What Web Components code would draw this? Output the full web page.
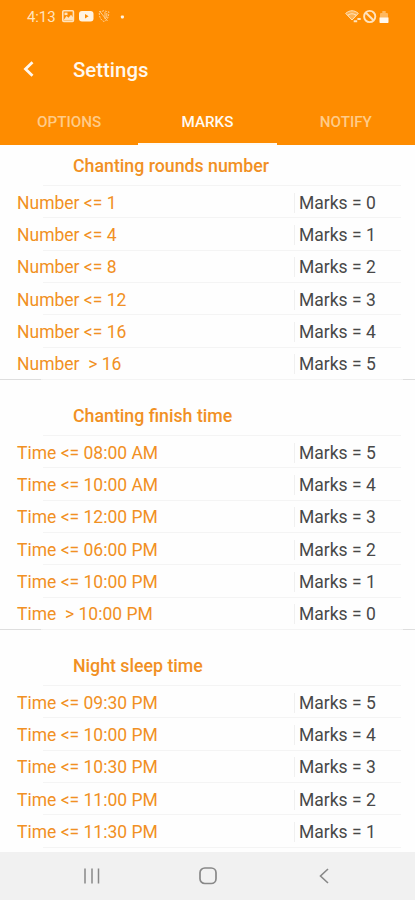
<!DOCTYPE html>
<html lang="en">
<head>
<meta charset="utf-8">
<title>Settings</title>
<style>
  body {
    margin: 0;
    width: 415px;
    height: 900px;
    overflow: hidden;
    background: #fefefe;
    font-family: Roboto, sans-serif;
    --color-primary: #fe8c00;
    --color-label: #f19023;
    --color-line: #f4f4f4;
  }
</style>
</head>
<body>
<settings-screen></settings-screen>

<script>
class StatusBar extends HTMLElement {
  constructor() {
    super();
    this.attachShadow({ mode: "open" }).innerHTML = /*html*/ `
      <style>
      :host {
        display: flex;
        justify-content: space-between;
        align-items: center;
        height: 34px;
        padding: 0 25px 0 27px;
        color: #ffe3bd;
      }

      .group {
        display: flex;
        align-items: center;
      }

      .time {
        font-size: 15px;
        line-height: 34px;
        letter-spacing: -0.1px;
        width: 35px;
      }

      svg {
        display: block;
      }
      </style>

      <div class="group">
        <span class="time">4:13</span>
        <svg width="66" height="16" viewBox="0 0 66 16" fill="none">
          <rect x="0.8" y="1.8" width="10.6" height="10.6" rx="1" stroke="currentColor" stroke-width="1.6"/>
          <path d="M2 10.5 4.5 7l2 1.8L9 5.8l2 2.4v3H2z" fill="currentColor"/>
          <rect x="2.5" y="3.6" width="3" height="2.5" fill="currentColor"/>
          <rect x="17" y="2" width="14.5" height="10.5" rx="3" fill="#fff3e2"/>
          <path d="M23 5v4.4l3.6-2.2z" fill="#fe8c00"/>
          <g stroke="currentColor" stroke-width="1" opacity="0.75">
            <path d="M42 1.6c-2 1-3.4 1.2-4.8 1.2 0 4.6.8 7.6 4.8 9.8 4-2.2 4.8-5.2 4.8-9.8-1.4 0-2.8-.2-4.8-1.2z" stroke-dasharray="2 1"/>
            <path d="m37.5 2 8 10M43 3v7M44.8 4v5"/>
          </g>
          <rect x="58.9" y="6.4" width="3" height="3" rx="0.8" fill="#fff3e2"/>
        </svg>
      </div>
      <svg width="45" height="16" viewBox="0 0 45 16" fill="none" stroke="currentColor">
        <path d="M.7 4.4c4-3.5 8.600-3.5 12.600 0L7 11z" fill="currentColor" fill-opacity="0.45" stroke-width="1"/>
        <path d="M2.8 6.3c2.7-2 5.7-2 8.4 0" stroke-width="1.2"/>
        <path d="M8.7 12.2h3.5M12.4 10h3.3" stroke-width="1.9"/>
        <circle cx="24.7" cy="7.5" r="5.6" stroke-width="1.9"/>
        <path d="m20.9 3.7 7.6 7.6" stroke-width="2"/>
        <path d="M35 13V5.3c0-.8.5-1.3 1.3-1.3h1V2h3.4v2h1c.8 0 1.3.5 1.3 1.3V13c0 .6-.4 1-1 1h-6c-.6 0-1-.4-1-1z" fill="currentColor" fill-opacity="0.5" stroke="none"/>
        <path d="M34.5 8.5h9V13c0 .6-.4 1-1 1h-7c-.6 0-1-.4-1-1z" fill="#fff8ef" stroke="none"/>
      </svg>
    `;
  }
}
customElements.define("status-bar", StatusBar);

class AppBar extends HTMLElement {
  constructor() {
    super();
    this.attachShadow({ mode: "open" }).innerHTML = /*html*/ `
      <style>
      :host {
        display: flex;
        align-items: center;
        gap: 38px;
        height: 70px;
        padding-left: 23px;
        color: #fff8ee;
      }

      h1 {
        margin: 0;
        padding-top: 1px;
        font-size: 20.4px;
        font-weight: 500;
        line-height: 24px;
      }
      </style>

      <svg width="12" height="16" viewBox="0 0 12 16" fill="none" stroke="currentColor" stroke-width="2.8">
        <path d="M9.5 1.3 2.5 8l7 6.7"/>
      </svg>
      <h1><slot></slot></h1>
    `;
  }
}
customElements.define("app-bar", AppBar);

class TabItem extends HTMLElement {
  constructor() {
    super();
    this.attachShadow({ mode: "open" }).innerHTML = /*html*/ `
      <style>
      :host {
        display: block;
        flex: 1;
        box-sizing: border-box;
        height: 41px;
        padding-top: 8px;
        text-align: center;
        font-size: 15.2px;
        font-weight: 500;
        line-height: 20px;
        color: #ffcb88;
        border-bottom: 2px solid transparent;
      }

      :host([selected]) {
        color: #fffaf3;
        border-color: #fffaf3;
      }
      </style>
      <slot></slot>
    `;
  }
}
customElements.define("tab-item", TabItem);

class MarkRow extends HTMLElement {
  constructor() {
    super();
    this.attachShadow({ mode: "open" }).innerHTML = /*html*/ `
      <style>
      :host {
        display: flex;
        align-items: center;
        box-sizing: border-box;
        height: 32.33px;
        margin: 0 14px 0 17px;
        padding-top: 1px;
        /* line starts a little after the label's left edge */
        background: linear-gradient(var(--color-line), var(--color-line)) 26px 100% / 100% 1px no-repeat;
        font-size: 17.5px;
        line-height: 20px;
      }

      .label {
        flex: 1;
        color: var(--color-label);
        white-space: pre;
      }

      .marks {
        width: 102px;
        padding-left: 4px;
        border-left: 1px solid #f0f0f0;
        color: #484848;
      }
      </style>
      <span class="label"><slot></slot></span>
      <span class="marks"></span>
    `;
  }

  connectedCallback() {
    this.shadowRoot.querySelector(".marks").textContent = `Marks = ${this.getAttribute("marks")}`;
  }
}
customElements.define("mark-row", MarkRow);

class MarkSection extends HTMLElement {
  constructor() {
    super();
    this.attachShadow({ mode: "open" }).innerHTML = /*html*/ `
      <style>
      :host {
        display: block;
        box-sizing: border-box;
        height: 250px;
        /* divider is darker at both ends, past the cells */
        background: linear-gradient(to right, #dedede 41px, #f1f1f1 41px 403px, #dedede 403px) bottom / 100% 1px no-repeat;
      }

      h2 {
        box-sizing: border-box;
        height: 56px;
        margin: 0 14px 0 43px;
        padding: 26px 0 0 30px;
        border-bottom: 1px solid var(--color-line);
        color: var(--color-label);
        font-size: 17.75px;
        font-weight: 500;
        line-height: 21px;
      }
      </style>
      <h2></h2>
      <slot></slot>
    `;
  }

  connectedCallback() {
    this.shadowRoot.querySelector("h2").textContent = this.getAttribute("heading");
  }
}
customElements.define("mark-section", MarkSection);

class NavBar extends HTMLElement {
  constructor() {
    super();
    this.attachShadow({ mode: "open" }).innerHTML = /*html*/ `
      <style>
      :host {
        display: flex;
        align-items: center;
        justify-content: space-between;
        box-sizing: border-box;
        height: 48px;
        padding: 0 82px 0 83px;
        background: #f1f1f1;
        color: #888;
      }
      </style>
      <svg width="18" height="18" viewBox="0 0 18 18" fill="none" stroke="currentColor" stroke-width="1.5">
        <path d="M2 1.5v15M9 1.5v15M15.5 1.5v15"/>
      </svg>
      <svg width="18" height="18" viewBox="0 0 18 18" fill="none" stroke="currentColor" stroke-width="1.7">
        <rect x="1" y="1" width="16" height="15.5" rx="4.8"/>
      </svg>
      <svg width="18" height="18" viewBox="0 0 18 18" fill="none" stroke="currentColor" stroke-width="1.6">
        <path d="M13 2 5.5 9l7.5 7"/>
      </svg>
    `;
  }
}
customElements.define("nav-bar", NavBar);

class SettingsScreen extends HTMLElement {
  constructor() {
    super();
    this.attachShadow({ mode: "open" }).innerHTML = /*html*/ `
      <style>
      :host {
        display: flex;
        flex-direction: column;
        height: 900px;
      }

      header {
        background: var(--color-primary);
      }

      nav {
        display: flex;
      }

      main {
        flex: 1;
        min-height: 0;
        overflow: hidden;
      }

      /* the list is scrolled a little under the header */
      .list {
        margin-top: -15px;
      }
      </style>

      <header>
        <status-bar></status-bar>
        <app-bar>Settings</app-bar>
        <nav>
          <tab-item>OPTIONS</tab-item>
          <tab-item selected>MARKS</tab-item>
          <tab-item>NOTIFY</tab-item>
        </nav>
      </header>
      <main>
        <div class="list">
          <mark-section heading="Chanting rounds number">
            <mark-row marks="0">Number &lt;= 1</mark-row>
            <mark-row marks="1">Number &lt;= 4</mark-row>
            <mark-row marks="2">Number &lt;= 8</mark-row>
            <mark-row marks="3">Number &lt;= 12</mark-row>
            <mark-row marks="4">Number &lt;= 16</mark-row>
            <mark-row marks="5">Number  &gt; 16</mark-row>
          </mark-section>
          <mark-section heading="Chanting finish time">
            <mark-row marks="5">Time &lt;= 08:00 AM</mark-row>
            <mark-row marks="4">Time &lt;= 10:00 AM</mark-row>
            <mark-row marks="3">Time &lt;= 12:00 PM</mark-row>
            <mark-row marks="2">Time &lt;= 06:00 PM</mark-row>
            <mark-row marks="1">Time &lt;= 10:00 PM</mark-row>
            <mark-row marks="0">Time  &gt; 10:00 PM</mark-row>
          </mark-section>
          <mark-section heading="Night sleep time">
            <mark-row marks="5">Time &lt;= 09:30 PM</mark-row>
            <mark-row marks="4">Time &lt;= 10:00 PM</mark-row>
            <mark-row marks="3">Time &lt;= 10:30 PM</mark-row>
            <mark-row marks="2">Time &lt;= 11:00 PM</mark-row>
            <mark-row marks="1">Time &lt;= 11:30 PM</mark-row>
          </mark-section>
        </div>
      </main>
      <nav-bar></nav-bar>
    `;
  }
}
customElements.define("settings-screen", SettingsScreen);
</script>
</body>
</html>
